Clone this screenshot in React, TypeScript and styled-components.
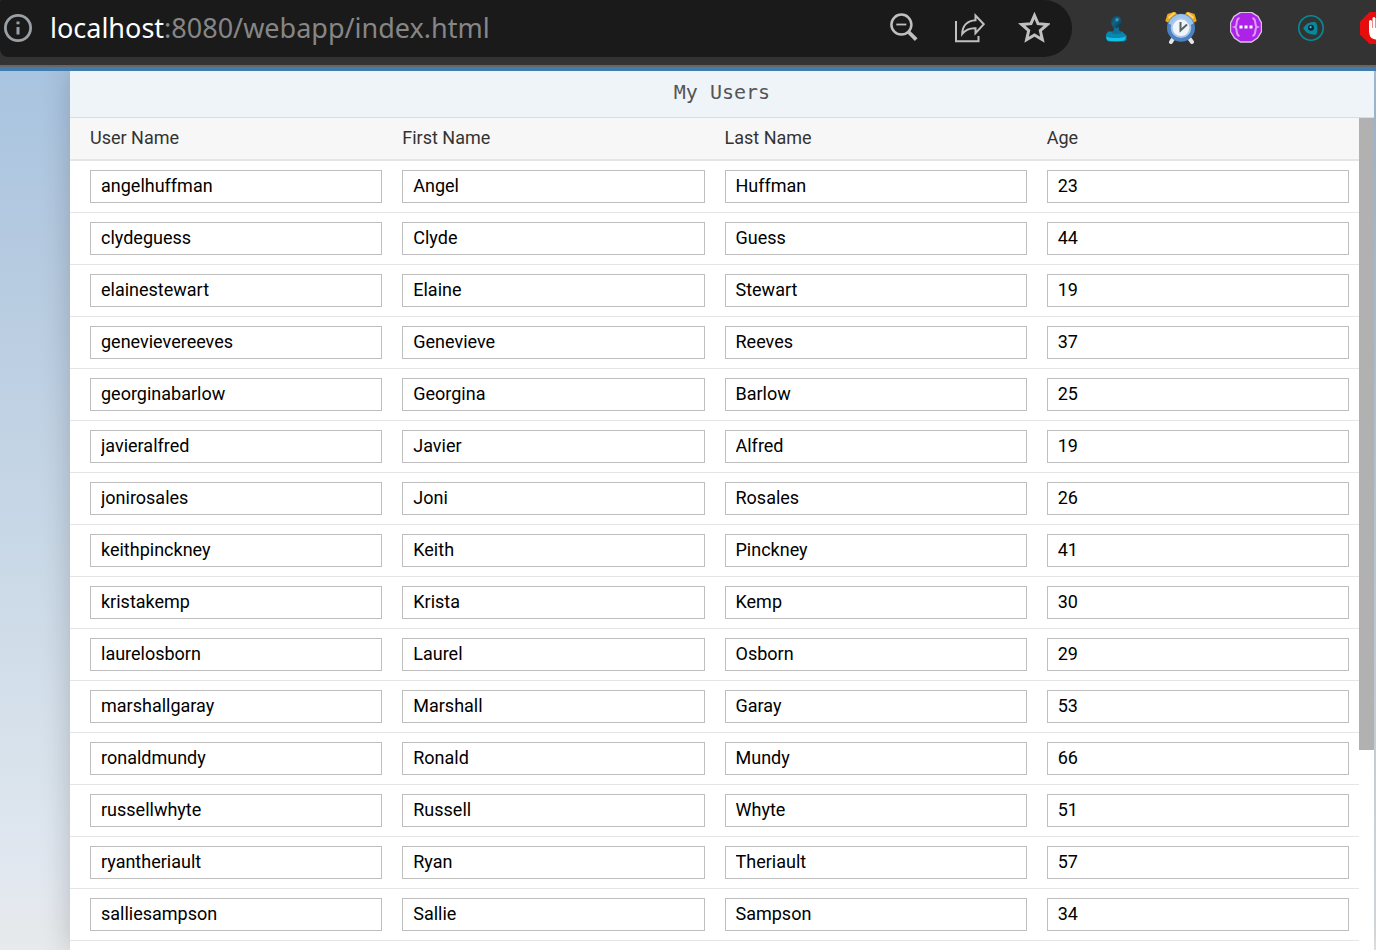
import React from 'react';
import styled, { createGlobalStyle } from 'styled-components';

const GlobalStyle = createGlobalStyle`
  *, *::before, *::after { box-sizing: border-box; }
  html, body { margin: 0; height: 100%; overflow: hidden; }
  #root { height: 100%; }
  body { font-family: Roboto, 'Liberation Sans', sans-serif; font-size: 18px; }
`;

const Window = styled.div`
  height: 100vh;
  display: flex;
  flex-direction: column;
  overflow: hidden;
`;

const BrowserBar = styled.header`
  flex: none;
  display: flex;
  align-items: flex-start;
  height: 67px;
  background: #333333;
  border-bottom: 2px solid #666666;
  overflow: hidden;
`;

const AddressBar = styled.div`
  flex: 1;
  min-width: 0;
  height: 57px;
  display: flex;
  align-items: center;
  padding: 0 22px 1px 2px;
  background: #1a1a1a;
  border-radius: 2px 28px 28px 8px;
`;

const IconButton = styled.button`
  flex: none;
  width: 32px;
  height: 32px;
  padding: 0;
  border: 0;
  background: none;
  cursor: pointer;

  svg { display: block; }
`;

const Url = styled.div`
  flex: 1;
  min-width: 0;
  margin-left: 16px;
  font: 27px/40px 'Noto Sans', 'Open Sans', sans-serif;
  color: #868686;
  white-space: nowrap;
  overflow: hidden;
`;

const Host = styled.span`
  color: #ffffff;
`;

const Group = styled.div<{ $extensions?: boolean }>`
  flex: none;
  display: flex;
  align-items: center;
  gap: 33px;
  ${p => p.$extensions && 'width: 304px; height: 56px; padding-left: 28px; overflow: hidden;'}
`;

const Shell = styled.main`
  flex: 1;
  min-height: 0;
  display: flex;
  padding: 0 2px 0 70px;
  border-top: 4px solid #427cac;
  background: linear-gradient(#a9c4e0, #b5cae0 20%, #d9e3ec 80%, #e3e8f0 93%, #e6eaea);
  overflow: hidden;
`;

const Panel = styled.section`
  flex: 1;
  min-width: 0;
  display: flex;
  flex-direction: column;
  background: #ffffff;
  box-shadow: 0 0 28px rgba(0, 0, 0, 0.2);
`;

const Title = styled.h1`
  flex: none;
  margin: 0;
  height: 47px;
  border-bottom: 1px solid #d3deea;
  background: #eff4f9;
  color: #555555;
  font: 20px/42px 'DejaVu Sans Mono', monospace;
  text-align: center;
`;

const ListArea = styled.div`
  flex: 1;
  min-height: 0;
  display: flex;
`;

const ListBody = styled.div`
  flex: 1;
  min-width: 0;
  overflow: hidden;
`;

const ScrollTrack = styled.div`
  flex: none;
  width: 15px;
  background: #ffffff;
`;

const ScrollThumb = styled.div`
  height: 76%;
  background: #b1b1b1;
`;

const Table = styled.table`
  width: 100%;
  table-layout: fixed;
  border-spacing: 0;
`;

const HeadCell = styled.th`
  height: 43px;
  padding: 0 10px 2px;
  border-bottom: 2px solid #e5e5e5;
  background: #f7f7f7;
  color: #333333;
  font-weight: 400;
  text-align: left;

  &:first-child { padding-left: 20px; }
`;

const Cell = styled.td`
  padding: 9px 10px;
  border-bottom: 1px solid #e5e5e5;

  &:first-child { padding-left: 20px; }
`;

const Field = styled.input`
  display: block;
  width: 100%;
  height: 33px;
  padding: 0 10px 2px;
  border: 1px solid #bfbfbf;
  border-radius: 0;
  background: #ffffff;
  color: #000000;
  font: inherit;
  outline: none;
`;

const columns = ['User Name', 'First Name', 'Last Name', 'Age'];

const users = [
  ['angelhuffman', 'Angel', 'Huffman', '23'],
  ['clydeguess', 'Clyde', 'Guess', '44'],
  ['elainestewart', 'Elaine', 'Stewart', '19'],
  ['genevievereeves', 'Genevieve', 'Reeves', '37'],
  ['georginabarlow', 'Georgina', 'Barlow', '25'],
  ['javieralfred', 'Javier', 'Alfred', '19'],
  ['jonirosales', 'Joni', 'Rosales', '26'],
  ['keithpinckney', 'Keith', 'Pinckney', '41'],
  ['kristakemp', 'Krista', 'Kemp', '30'],
  ['laurelosborn', 'Laurel', 'Osborn', '29'],
  ['marshallgaray', 'Marshall', 'Garay', '53'],
  ['ronaldmundy', 'Ronald', 'Mundy', '66'],
  ['russellwhyte', 'Russell', 'Whyte', '51'],
  ['ryantheriault', 'Ryan', 'Theriault', '57'],
  ['salliesampson', 'Sallie', 'Sampson', '34'],
];

const Svg = ({ children }: { children: React.ReactNode }) => (
  <svg width="32" height="32" viewBox="0 0 32 32" fill="none" aria-hidden="true">{children}</svg>
);

const InfoIcon = () => (
  <Svg>
    <circle cx="16" cy="16" r="12.6" stroke="#9aa0a6" strokeWidth="2.8" />
    <path d="M16 15v7.5M16 9.5v2.8" stroke="#9aa0a6" strokeWidth="3" />
  </Svg>
);

const ZoomOutIcon = () => (
  <Svg>
    <g stroke="#c0c0c0">
      <circle cx="13.4" cy="12.6" r="10" strokeWidth="2.5" />
      <path d="M8.3 12.5h10" strokeWidth="1.8" />
      <path d="M20.6 20l7.6 7.6" strokeWidth="3.8" />
    </g>
  </Svg>
);

const ShareIcon = () => (
  <Svg>
    <g stroke="#c0c0c0" strokeWidth="2">
      <path d="M3 9v20.300h22.500v-5.300" />
      <path d="M22.500 3.500l8.300 8.700-8.300 9v-5c-6-.3-10 1.600-13.300 5.800.2-8 5-13.300 13.300-13.800z" />
    </g>
  </Svg>
);

const StarIcon = () => (
  <Svg>
    <path d="M16.5 3.5l3.5 8.2 9.3.8-7 6 2.1 9.2-7.9-4.800-7.900 4.800 2.100-9.200-7-6 9.300-.8z" stroke="#c0c0c0" strokeWidth="3" />
  </Svg>
);

const StampIcon = () => (
  <Svg>
    <defs>
      <linearGradient id="stampTop" x1="0" y1="0" x2="1" y2="1">
        <stop offset="0" stopColor="#123e58" />
        <stop offset="0.45" stopColor="#126486" />
        <stop offset="1" stopColor="#0c2b3f" />
      </linearGradient>
    </defs>
    <path d="M8 19.5h14l4.500 4v4.500L24 29.500H8.500L6 27v-4.500z" fill="#0b86af" />
    <path d="M6 24.500c5 2 14 2 20 0l-1.500 3.700c-4 1.400-13 1.300-17 .2z" fill="#12c1e6" />
    <path d="M11 21c3.500-2 3.500-4 2-6.500h6.500C18 17 19.500 19 22 21c-2 1.500-8.500 1.500-11 0z" fill="#0f6f95" />
    <ellipse cx="16.300" cy="10" rx="5.300" ry="6" fill="url(#stampTop)" />
    <circle cx="17" cy="7.800" r="1.700" fill="#2f9cbe" />
  </Svg>
);

const ClockIcon = () => (
  <Svg>
    <path d="M8.500 26L6 30M24 26l3 4" stroke="#e6e6e6" strokeWidth="4" strokeLinecap="round" />
    <path d="M.3 9L2.500 2l7.500-2.500 2.500 3.500-9 8zM31.700 9l-2.200-7L22-.5 19.500 3l9 8z" fill="#eda819" />
    <path d="M3.500 6l6-5M28.500 6l-6-5" stroke="#ffd773" strokeWidth="2" />
    <circle cx="16" cy="15.800" r="14" fill="#4d80bf" />
    <path d="M3.500 11.500a13 13 0 0 1 25 0l-4 2H7.500z" fill="#9dc3ea" />
    <circle cx="16" cy="15.800" r="9.300" fill="#f1f5fa" stroke="#a9c8eb" strokeWidth="2" />
    <path d="M15.500 10V18.500l6.500-6" stroke="#56645f" strokeWidth="2" />
  </Svg>
);

const BracesIcon = () => (
  <Svg>
    <path d="M10.500.3h11L28 4.500l3.500 6.500v8.500L27.500 26 21.500 30h-11L4.500 26 .5 19.500V11L4 4.500z" fill="#ad22e8" stroke="#d9c3e3" strokeWidth="1.400" />
    <path d="M9.500 6c-4.500 1-1.500 8-4.500 9 3 1 0 8 4.500 9M22.500 6c4.500 1 1.500 8 4.500 9-3 1 0 8-4.500 9" stroke="#dd9cf6" strokeWidth="2" />
    <path d="M9.500 15h3M14.500 15h3M19.500 15h3" stroke="#ffffff" strokeWidth="2.800" />
  </Svg>
);

const EyeIcon = () => (
  <Svg>
    <circle cx="16" cy="16" r="12.200" stroke="#078a98" strokeWidth="1.600" />
    <path d="M8.200 16.300c3-5 7.500-7.200 12.800-5.800 2 4 2 8 .5 12-5.500 1-10.300-1.200-13.300-6.200z" fill="#078a98" />
    <circle cx="16" cy="15.700" r="3" fill="#14243b" />
    <circle cx="15.600" cy="15.200" r="1.100" fill="#6aa9df" />
  </Svg>
);

const StopHandIcon = () => (
  <Svg>
    <path d="M9.500 0h13L32 9.500v13L22.500 32h-13L0 22.500v-13z" fill="#e50d0d" />
    <path d="M10.500 19V9.500M14 17V6.500M17.500 17V6M21.500 17V8" stroke="#ffffff" strokeWidth="3" strokeLinecap="round" />
    <path d="M9 16h14l3-3c1.500 0 2 1 1.500 2l-5 10c-2 3-9 3.500-12 0C9.300 23 9 20 9 16z" fill="#ffffff" />
  </Svg>
);

const extensions = [
  { label: 'Stamp', Icon: StampIcon },
  { label: 'Alarm clock', Icon: ClockIcon },
  { label: 'Braces', Icon: BracesIcon },
  { label: 'Eye', Icon: EyeIcon },
  { label: 'Blocker', Icon: StopHandIcon },
];

export default function App() {
  return (
    <Window>
      <GlobalStyle />
      <BrowserBar>
        <AddressBar>
          <IconButton aria-label="Site information"><InfoIcon /></IconButton>
          <Url><Host>localhost</Host>:8080/webapp/index.html</Url>
          <Group>
            <IconButton aria-label="Zoom out"><ZoomOutIcon /></IconButton>
            <IconButton aria-label="Share"><ShareIcon /></IconButton>
            <IconButton aria-label="Bookmark"><StarIcon /></IconButton>
          </Group>
        </AddressBar>
        <Group $extensions>
          {extensions.map(({ label, Icon }) => (
            <IconButton key={label} aria-label={label}><Icon /></IconButton>
          ))}
        </Group>
      </BrowserBar>
      <Shell>
        <Panel>
          <Title>My Users</Title>
          <ListArea>
            <ListBody>
              <Table>
                <thead>
                  <tr>
                    {columns.map(name => <HeadCell key={name} scope="col">{name}</HeadCell>)}
                  </tr>
                </thead>
                <tbody>
                  {users.map(user => (
                    <tr key={user[0]}>
                      {user.map((value, i) => (
                        <Cell key={columns[i]}>
                          <Field aria-label={columns[i]} defaultValue={value} />
                        </Cell>
                      ))}
                    </tr>
                  ))}
                </tbody>
              </Table>
            </ListBody>
            <ScrollTrack><ScrollThumb /></ScrollTrack>
          </ListArea>
        </Panel>
      </Shell>
    </Window>
  );
}
